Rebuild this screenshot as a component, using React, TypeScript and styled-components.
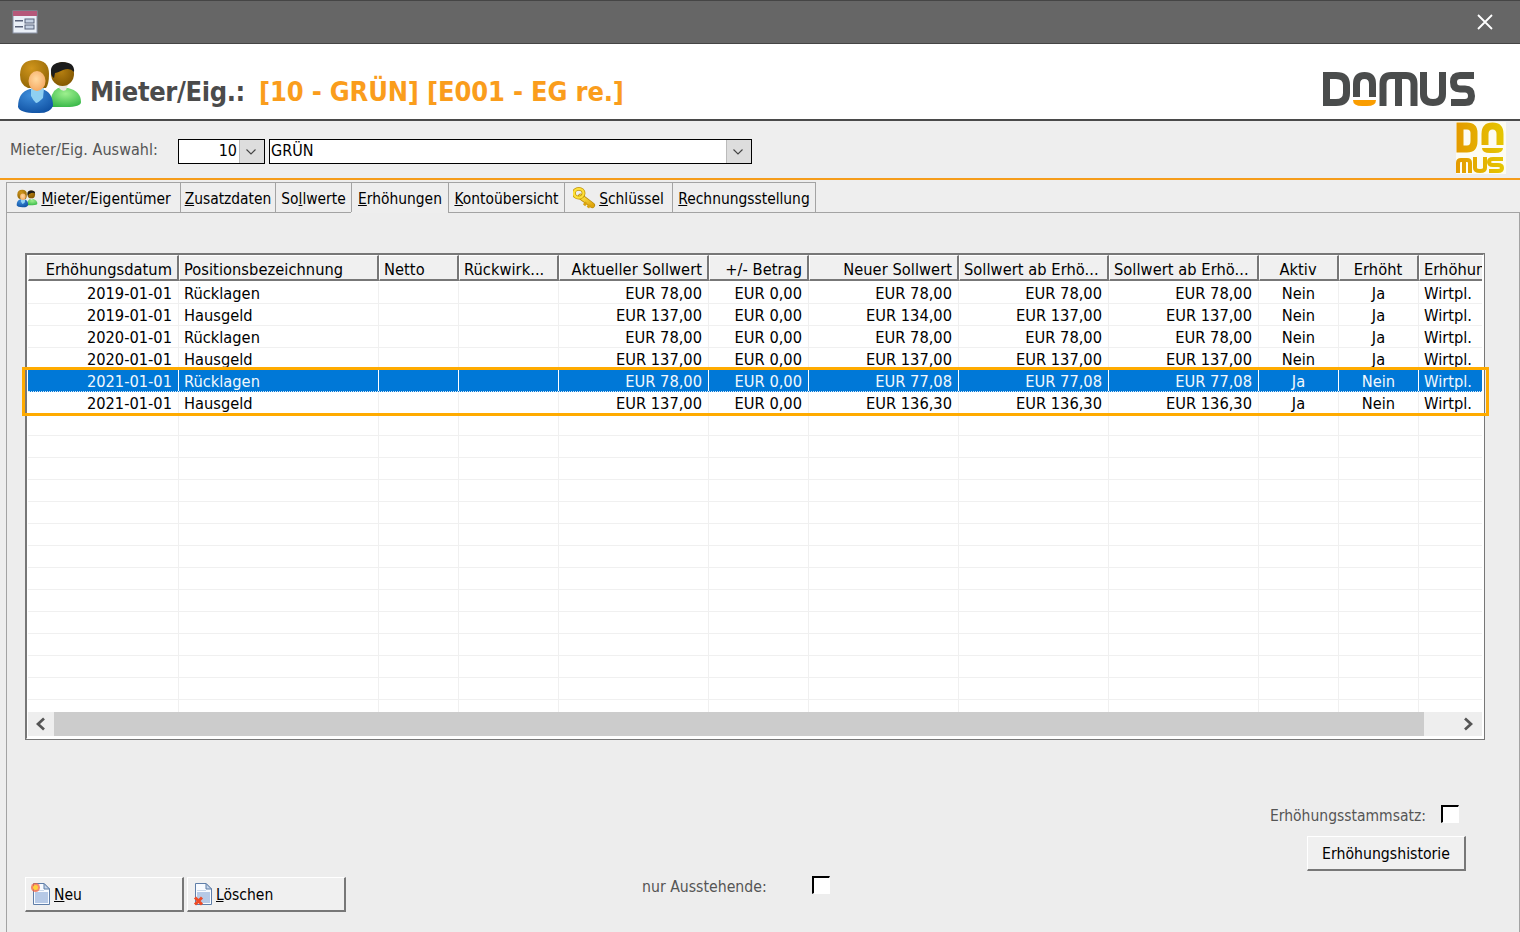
import React from "react";
import styled, { createGlobalStyle } from "styled-components";

const FONT = `"DejaVu Sans Condensed", "DejaVu Sans", "Liberation Sans", sans-serif`;

const Global = createGlobalStyle`
  html, body { margin: 0; padding: 0; }
  body { width: 1520px; height: 932px; overflow: hidden; background: #eeeeee; font-family: ${FONT}; font-size: 16.3px; font-stretch: condensed; color: #000; }
  #root { width: 1520px; height: 932px; }
`;

const Page = styled.div`display: flex; flex-direction: column; width: 1520px; height: 932px; background: #eeeeee;`;
const TitleBar = styled.header`
  display: flex; align-items: center; justify-content: space-between; box-sizing: border-box; height: 44px;
  padding: 0 26px 0 12px; background: #666666; border-top: 1px solid #454545; border-bottom: 1px solid #454545;
`;
const Hero = styled.section`
  display: flex; align-items: center; box-sizing: border-box; height: 77px; padding: 0 45px 0 16px;
  background: #fff; border-bottom: 2px solid #4a4a4a;
`;
const HeroIcon = styled.span`display: block; margin-top: 10px; height: 57px;`;
const HeroTitle = styled.h1`
  margin: 0 0 0 7px; padding-top: 21px; font-size: 27px; line-height: 34px; font-weight: 700; white-space: nowrap; color: #4b4b4b; letter-spacing: -0.35px;
`;
const HeroAccent = styled.span`margin-left: 14px; color: #fa9d1c; letter-spacing: -0.17px;`;
const Logo = styled.svg`margin: 15px 0 0 auto; display: block;`;
const Picker = styled.section`
  display: flex; align-items: flex-start; box-sizing: border-box; height: 59px; padding: 18px 14px 0 10px; border-bottom: 2px solid #f59c1a;
`;
const PickerLabel = styled.label`width: 168px; font-size: 16px; line-height: 22px; color: #555; letter-spacing: 0.05px; white-space: nowrap;`;
const Combo = styled.div<{ $w: number }>`
  display: flex; box-sizing: border-box; width: ${(p) => p.$w}px; height: 25px; margin-right: 4px; background: #fff; border: 1px solid #000;
`;
const ComboValue = styled.span<{ $right?: boolean }>`
  flex: 1; font-size: 16px; line-height: 21px; padding: 0 ${(p) => (p.$right ? "2px" : "0")} 0 ${(p) => (p.$right ? "0" : "1px")}; text-align: ${(p) => (p.$right ? "right" : "left")};
`;
const ComboButton = styled.span`
  display: flex; align-items: center; justify-content: center; width: 25px; padding-right: 3px; background: #dddddd; border-left: 1px solid #bbb; box-sizing: border-box;
`;
const SmallLogo = styled.svg`display: block; margin: -17px 0 0 auto;`;
const Tabs = styled.nav`display: flex; height: 31px; margin-top: 2px; padding-left: 6px; box-sizing: border-box;`;
const Tab = styled.div<{ $active?: boolean; $w: number }>`
  display: flex; align-items: center; justify-content: center; gap: 3px; box-sizing: border-box; width: ${(p) => p.$w}px; height: 31px;
  border: 1px solid #a3a3a3; border-left-width: ${(p) => (p.$active ? 0 : 1)}px; border-right-width: ${(p) => (p.$active ? 0 : 1)}px;
  border-bottom-color: ${(p) => (p.$active ? "#eeeeee" : "#a3a3a3")}; margin-right: -1px; white-space: nowrap; font-size: 15.4px; line-height: 30px; position: relative; z-index: 1;
  padding-top: 2px;
`;
const Panel = styled.main`
  flex: 1; display: flex; flex-direction: column; min-height: 0; margin: -1px 0 0 6px; padding: 40px 34px 20px 18px;
  background: #ededed; border: 1px solid #a3a3a3; border-bottom: 0; border-right-width: 1px; box-sizing: border-box;
`;
const GridFrame = styled.div`position: relative; box-sizing: border-box; height: 487px; border: 1px solid #777;`;
const GridInner = styled.div`
  display: flex; flex-direction: column; box-sizing: border-box; height: 485px; overflow: hidden; background: #fff;
  border-left: 1px solid #777; border-top: 1px solid #777; border-right: 1px solid #fff; border-bottom: 1px solid #fff; padding: 0 1px 0 1px;
`;
const COLS = "151px 200px 80px 100px 150px 100px 150px 150px 150px 80px 80px 90px";
const HeadRow = styled.div`display: grid; grid-template-columns: ${COLS}; height: 27px; flex: none; overflow: hidden;`;
const HeadCell = styled.div<{ $align: string }>`
  box-sizing: border-box; height: 26px; padding: 0 5px 0 4px; line-height: 28px; background: #f0f0f0; overflow: hidden; white-space: nowrap;
  text-align: ${(p) => p.$align}; border-top: 1px solid #fff; border-left: 1px solid #fff; border-right: 2px solid #777; border-bottom: 2px solid #777; letter-spacing: 0.05px;
`;
const Body = styled.div`flex: none; height: 430px; overflow: hidden;`;
const Row = styled.div<{ $sel?: boolean }>`
  display: grid; grid-template-columns: ${COLS}; box-sizing: border-box; height: 22px; overflow: hidden;
  background: ${(p) => (p.$sel ? "#0078d7" : "#fff")}; color: ${(p) => (p.$sel ? "#f2f8fd" : "#000")};
  border-bottom: 1px ${(p) => (p.$sel ? "dotted #d3e7f7" : "solid #f0f0f0")};
`;
const Cell = styled.div<{ $align: string; $sel?: boolean }>`
  box-sizing: border-box; height: 21px; padding: 0 5px; padding-right: ${(p) => (p.$align === "right" ? "6px" : "5px")}; line-height: 24px; overflow: hidden; white-space: nowrap;
  text-align: ${(p) => p.$align}; border-right: 1px solid ${(p) => (p.$sel ? "#fff" : "#f0f0f0")};
`;
const Scrollbar = styled.div`display: flex; flex: none; height: 24px; background: #eeeeee;`;
const ScrollButton = styled.div`display: flex; align-items: center; justify-content: center; flex: none; width: 26px;`;
const ScrollThumb = styled.div`flex: none; width: 1370px; background: #cccccc;`;
const ScrollRest = styled.div`flex: 1; display: flex; align-items: center; justify-content: flex-end; padding-right: 9px;`;
const SelectionFrame = styled.div`
  position: absolute; left: -4px; top: 113px; width: 1467px; height: 49px; box-sizing: border-box; border: 3px solid #ffab00; pointer-events: none;
`;
const Footer = styled.footer`flex: 1; display: flex; align-items: flex-end; min-height: 0;`;
const Button = styled.button<{ $w?: number }>`
  display: flex; align-items: center; box-sizing: border-box; width: ${(p) => p.$w ?? 159}px; height: 35px; padding: 0 0 0 5px; gap: 3px; background: #f0f0f0;
  font: inherit; font-size: 15.5px; line-height: 21px; font-stretch: inherit; color: #000; border-style: solid; border-width: 1px 2px 2px 1px; border-color: #fff #777 #777 #fff; border-radius: 0;
`;
const ButtonLabel = styled.span`padding-top: 2px;`;
const HistoryButton = styled(Button)`justify-content: center; padding: 0; font-size: 15.7px;`;
const ButtonGroup = styled.div`display: flex; gap: 3px;`;
const Pending = styled.div`display: flex; align-items: flex-end; margin: 0 0 18px 296px; color: #555; font-size: 15.7px;`;
const PendingLabel = styled.span`width: 170px; line-height: 20px; margin-bottom: -3px; white-space: nowrap;`;
const Check = styled.span`
  display: block; box-sizing: border-box; width: 18px; height: 18px; background: #fff; border-style: solid; border-width: 2px 1px 1px 2px; border-color: #000 #fff #fff #000;
`;
const RightBlock = styled.div`display: flex; flex-direction: column; align-items: flex-end; margin: 0 19px 41px auto;`;
const Master = styled.div`display: flex; align-items: flex-end; margin: 0 7px 13px 0; color: #555; font-size: 15.5px; gap: 15px;`;
const MasterLabel = styled.span`line-height: 20px; margin-bottom: -3px;`;

const Mark = ({ c, k }: { c: string; k: React.ReactNode }) => (
  <span>
    <u>{c}</u>
    {k}
  </span>
);

const People = ({ w, h, id }: { w: number; h: number; id: string }) => (
  <svg width={w} height={h} viewBox="16 58 67 57">
    <defs>
      <radialGradient id={`${id}b`} cx="0.4" cy="0.25" r="0.9"><stop offset="0" stopColor="#3f8fdc" /><stop offset="1" stopColor="#0a4a9c" /></radialGradient>
      <radialGradient id={`${id}g`} cx="0.5" cy="0.3" r="0.8"><stop offset="0" stopColor="#9df08e" /><stop offset="1" stopColor="#2fb342" /></radialGradient>
      <radialGradient id={`${id}h`} cx="0.4" cy="0.3" r="0.8"><stop offset="0" stopColor="#d0951c" /><stop offset="1" stopColor="#8d6203" /></radialGradient>
      <radialGradient id={`${id}f`} cx="0.45" cy="0.4" r="0.7"><stop offset="0" stopColor="#ffd9a0" /><stop offset="1" stopColor="#f4a35a" /></radialGradient>
      <radialGradient id={`${id}m`} cx="0.45" cy="0.4" r="0.7"><stop offset="0" stopColor="#b57f10" /><stop offset="1" stopColor="#7c5200" /></radialGradient>
    </defs>
    <path d="M50 107 Q50 92 58 88 H68 Q81 91 81 102 Q81 107 66 107Z" fill={`url(#${id}g)`} />
    <path d="M59 85 L68 85 L66 90 Q62 92 59 88Z" fill="#e8e8e0" />
    <ellipse cx="62.500" cy="74" rx="11.500" ry="12" fill={`url(#${id}m)`} />
    <path d="M51 72 Q50 63 62 62 Q75 62 74 72 Q70 67 63 70 Q57 73 55 73 L54 78 Q51 76 51 72Z" fill="#1c1c1c" />
    <path d="M18 107 Q18 92 30 89 H42 Q53 92 53 106 Q50 114 36 113 Q20 113 18 107Z" fill={`url(#${id}b)`} />
    <path d="M31 88 H44 L43 98 Q38 103 36 103 Q33 100 31 96Z" fill="#8fd0f2" />
    <path d="M20 75 Q20 60 35 60 Q49 60 49 74 Q49 84 46 88 H28 Q20 85 20 75Z" fill={`url(#${id}h)`} />
    <ellipse cx="37" cy="81" rx="8.500" ry="10" fill={`url(#${id}f)`} />
  </svg>
);

const Key = () => (
  <svg width="23" height="23" viewBox="0 0 24 24">
    <defs><linearGradient id="key" x1="0" y1="0" x2="1" y2="1"><stop offset="0" stopColor="#ffe74a" /><stop offset="1" stopColor="#e0a60e" /></linearGradient></defs>
    <path d="M8 10 L20 19" stroke="#b98a0a" strokeWidth="6" strokeLinecap="round" />
    <path d="M8 10 L20 19" stroke="url(#key)" strokeWidth="4.400" strokeLinecap="round" />
    <path d="M14 16 l-2.500 3 M17.500 18.500 l-2 3" stroke="#d9a310" strokeWidth="3" />
    <ellipse cx="6" cy="6.500" rx="5" ry="4.500" fill="none" stroke="#c29409" strokeWidth="4" />
    <ellipse cx="6" cy="6.500" rx="5" ry="4.500" fill="none" stroke="#fde03a" strokeWidth="2.400" />
  </svg>
);

const Doc = ({ kind }: { kind: "new" | "del" }) => (
  <svg width="20" height="24" viewBox="0 0 20 24">
    <path d="M2.500 1.500 H13 L18.500 7 V22.500 H2.500Z" fill="#f8fbff" stroke="#5f7ea8" />
    <path d="M13 1.500 V7 H18.500Z" fill="#c6d6ea" stroke="#5f7ea8" />
    <rect x="4" y="10" width="13" height="11" fill="#b6c9e6" />
    <rect x="4" y="8" width="9" height="1" fill="#c9d7ea" />
    {kind === "new" ? (
      <g>
        <circle cx="4.500" cy="5.500" r="4.500" fill="#f5643c" opacity="0.75" />
        <circle cx="4.500" cy="5.500" r="2.500" fill="#ffd23c" />
      </g>
    ) : (
      <path d="M2 15.500 L9 22.500 M9 15.500 L2 22.500" stroke="#ee4a26" strokeWidth="3" />
    )}
  </svg>
);

const FormIcon = () => (
  <svg width="26" height="24" viewBox="0 0 26 24">
    <rect x="1" y="1" width="24" height="22" fill="#eaf0f8" stroke="#8c95a8" />
    <rect x="1" y="1" width="24" height="5" fill="#b5587a" />
    <rect x="3" y="10" width="8" height="1.500" fill="#59627a" />
    <rect x="3" y="16" width="8" height="1.500" fill="#59627a" />
    <rect x="13" y="9" width="9" height="4" fill="#c5d1e3" stroke="#59627a" strokeWidth="1" />
    <rect x="13" y="15" width="9" height="4" fill="#c5d1e3" stroke="#59627a" strokeWidth="1" />
  </svg>
);

const Close = () => (
  <svg width="18" height="18" viewBox="0 0 18 18">
    <path d="M2 2 L16 16 M16 2 L2 16" stroke="#fff" strokeWidth="1.800" />
  </svg>
);

const Chevron = () => (
  <svg width="12" height="8" viewBox="0 0 12 8"><path d="M1.500 1.500 L6 6 L10.500 1.500" fill="none" stroke="#444" strokeWidth="1.100" /></svg>
);
const ScrollArrow = ({ right }: { right?: boolean }) => (
  <svg width="10" height="14" viewBox="0 0 10 14">
    <path d={right ? "M2 1.500 L8 7 L2 12.500" : "M8 1.500 L2 7 L8 12.500"} fill="none" stroke="#555" strokeWidth="2.700" />
  </svg>
);

const DomusShapes = ({ dark, accent, sw = 7 }: { dark: string; accent: string; sw?: number }) => (
  <g fill="none" stroke={dark} strokeWidth={sw}>
    <path d="M1326.500 75.500 V102.500 H1336 Q1346.500 102.500 1346.500 93 V85 Q1346.500 75.500 1336 75.500 Z" />
    <path d="M1356.500 97 V84 Q1356.500 75.500 1364.500 75.500 Q1372.500 75.500 1372.500 84 V97" />
    <path d="M1353 100 H1376 Q1376 106 1367 106 H1362 Q1353 106 1353 100Z" fill={accent} stroke="none" />
  </g>
);

const BigLogo = () => (
  <Logo width="152" height="34" viewBox="1323 72 152 34">
    <DomusShapes dark="#4a4c4c" accent="#fa9d00" />
    <g fill="none" stroke="#4a4c4c" strokeWidth="7">
      <path d="M1383 106 V84 Q1383 75.500 1391 75.500 H1406 Q1414 75.500 1414 84 V106 M1398.500 76 V106" />
      <path d="M1423.500 72 V94 Q1423.500 102.500 1433 102.500 Q1442.500 102.500 1442.500 94 V72" />
      <path d="M1474 75.500 H1460 Q1453.500 75.500 1453.500 82 Q1453.500 89 1460 89 H1465 Q1471.500 89 1471.500 96 Q1471.500 102.500 1465 102.500 H1451" />
    </g>
  </Logo>
);

const TinyLogo = () => (
  <SmallLogo width="50" height="52" viewBox="0 0 50 52">
    <defs>
      <linearGradient id="dom" gradientUnits="userSpaceOnUse" x1="0" y1="0" x2="50" y2="0">
        <stop offset="0" stopColor="#e49a00" /><stop offset="1" stopColor="#e5c800" />
      </linearGradient>
    </defs>
    <rect width="50" height="52" fill="#fdfcf2" />
    <g fill="none" stroke="url(#dom)" strokeWidth="7">
      <path d="M4 4 V27 H11 Q18 27 18 19 V11 Q18 4 11 4 Z" />
      <path d="M29 23 V12 Q29 4 36.500 4 Q44 4 44 12 V23" />
    </g>
    <path d="M26 26 H47 Q47 31 39 31 H34 Q26 31 26 26Z" fill="url(#dom)" />
    <g fill="none" stroke="url(#dom)" strokeWidth="4">
      <path d="M2 51 V41 Q2 38 5 38 H11 Q14 38 14 41 V51 M8 38 V51" />
      <path d="M19 35 V46 Q19 49 24 49 Q29 49 29 46 V35" />
      <path d="M47 37 H37 Q33 37 33 40 Q33 43 37 43 H42 Q46 43 46 46 Q46 49 42 49 H33" />
    </g>
  </SmallLogo>
);

type Align = "left" | "right" | "center";
const aligns: Align[] = ["right", "left", "left", "left", "right", "right", "right", "right", "right", "center", "center", "left"];
const heads: [string, Align][] = [
  ["Erhöhungsdatum", "right"], ["Positionsbezeichnung", "left"], ["Netto", "left"], ["Rückwirk...", "left"],
  ["Aktueller Sollwert", "right"], ["+/- Betrag", "right"], ["Neuer Sollwert", "right"], ["Sollwert ab Erhö...", "left"],
  ["Sollwert ab Erhö...", "left"], ["Aktiv", "center"], ["Erhöht", "center"], ["Erhöhungsart", "left"],
];
const rows: string[][] = [
  ["2019-01-01", "Rücklagen", "", "", "EUR 78,00", "EUR 0,00", "EUR 78,00", "EUR 78,00", "EUR 78,00", "Nein", "Ja", "Wirtpl."],
  ["2019-01-01", "Hausgeld", "", "", "EUR 137,00", "EUR 0,00", "EUR 134,00", "EUR 137,00", "EUR 137,00", "Nein", "Ja", "Wirtpl."],
  ["2020-01-01", "Rücklagen", "", "", "EUR 78,00", "EUR 0,00", "EUR 78,00", "EUR 78,00", "EUR 78,00", "Nein", "Ja", "Wirtpl."],
  ["2020-01-01", "Hausgeld", "", "", "EUR 137,00", "EUR 0,00", "EUR 137,00", "EUR 137,00", "EUR 137,00", "Nein", "Ja", "Wirtpl."],
  ["2021-01-01", "Rücklagen", "", "", "EUR 78,00", "EUR 0,00", "EUR 77,08", "EUR 77,08", "EUR 77,08", "Ja", "Nein", "Wirtpl."],
  ["2021-01-01", "Hausgeld", "", "", "EUR 137,00", "EUR 0,00", "EUR 136,30", "EUR 136,30", "EUR 136,30", "Ja", "Nein", "Wirtpl."],
];
const empty = Array.from({ length: 14 }, () => Array(12).fill("") as string[]);

export default function App() {
  return (
    <Page>
      <Global />
      <TitleBar>
        <FormIcon />
        <Close />
      </TitleBar>
      <Hero>
        <HeroIcon><People w={67} h={57} id="hero" /></HeroIcon>
        <HeroTitle>
          Mieter/Eig.:<HeroAccent>[10 - GRÜN] [E001 - EG re.]</HeroAccent>
        </HeroTitle>
        <BigLogo />
      </Hero>
      <Picker>
        <PickerLabel>Mieter/Eig. Auswahl:</PickerLabel>
        <Combo $w={87}>
          <ComboValue $right>10</ComboValue>
          <ComboButton><Chevron /></ComboButton>
        </Combo>
        <Combo $w={483}>
          <ComboValue>GRÜN</ComboValue>
          <ComboButton><Chevron /></ComboButton>
        </Combo>
        <TinyLogo />
      </Picker>
      <Tabs>
        <Tab $w={175}><People w={22} h={19} id="tab" /><Mark c="M" k="ieter/Eigentümer" /></Tab>
        <Tab $w={96}><Mark c="Z" k="usatzdaten" /></Tab>
        <Tab $w={77}><span>So<u>l</u>lwerte</span></Tab>
        <Tab $w={98} $active><Mark c="E" k="rhöhungen" /></Tab>
        <Tab $w={117}><Mark c="K" k="ontoübersicht" /></Tab>
        <Tab $w={109}><Key /><Mark c="S" k="chlüssel" /></Tab>
        <Tab $w={144}><Mark c="R" k="echnungsstellung" /></Tab>
      </Tabs>
      <Panel>
        <GridFrame>
          <GridInner>
            <HeadRow>
              {heads.map(([t, a], i) => (
                <HeadCell key={i} $align={a}>{t}</HeadCell>
              ))}
            </HeadRow>
            <Body>
              {[...rows, ...empty].map((r, i) => (
                <Row key={i} $sel={i === 4}>
                  {r.map((c, j) => (
                    <Cell key={j} $align={aligns[j]} $sel={i === 4}>{c}</Cell>
                  ))}
                </Row>
              ))}
            </Body>
            <Scrollbar>
              <ScrollButton><ScrollArrow /></ScrollButton>
              <ScrollThumb />
              <ScrollRest><ScrollArrow right /></ScrollRest>
            </Scrollbar>
          </GridInner>
          <SelectionFrame />
        </GridFrame>
        <Footer>
          <ButtonGroup>
            <Button><Doc kind="new" /><ButtonLabel><Mark c="N" k="eu" /></ButtonLabel></Button>
            <Button><Doc kind="del" /><ButtonLabel><Mark c="L" k="öschen" /></ButtonLabel></Button>
          </ButtonGroup>
          <Pending>
            <PendingLabel>nur Ausstehende:</PendingLabel>
            <Check />
          </Pending>
          <RightBlock>
            <Master>
              <MasterLabel>Erhöhungsstammsatz:</MasterLabel>
              <Check />
            </Master>
            <HistoryButton>Erhöhungshistorie</HistoryButton>
          </RightBlock>
        </Footer>
      </Panel>
    </Page>
  );
}
